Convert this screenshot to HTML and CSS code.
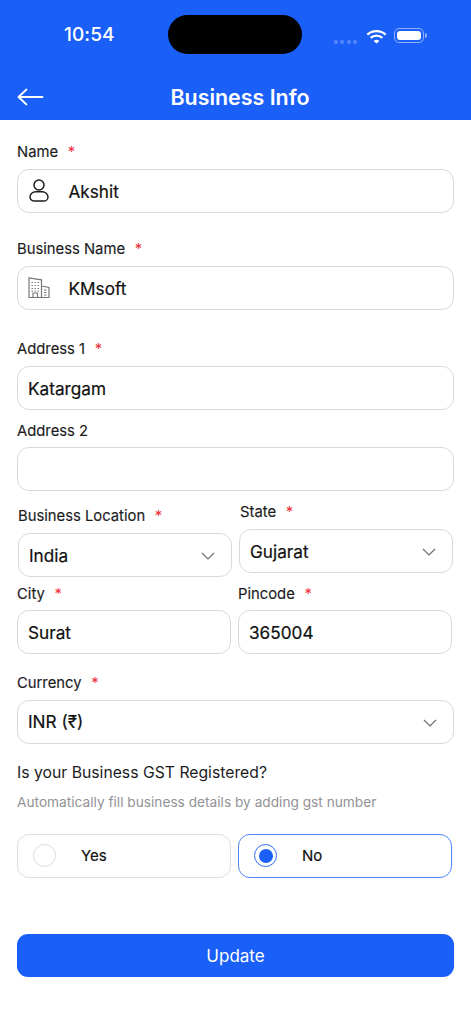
FILE: index.html
```html
<!DOCTYPE html>
<html lang="en">
<head>
<meta charset="utf-8">
<title>Business Info</title>
<link rel="stylesheet" href="styles.css">
</head>
<body>
<header class="top">
  <div class="status">
    <span class="time">10:54</span>
    <span class="island"></span>
    <span class="status-right">
      <span class="dots"><i></i><i></i><i></i><i></i></span>
      <svg class="wifi" width="21" height="15" viewBox="0 0 21 15" fill="none" stroke="#fff" stroke-width="2.3"><path d="M1.3 5.600C6.400.9 14.600.9 19.700 5.600"/><path d="M4.600 8.900c3.300-3 8.500-3 11.800 0"/><path d="M10.500 14.600 7.700 11.900c1.600-1.400 4-1.400 5.600 0z" fill="#fff" stroke="none"/></svg>
      <span class="battery"><b></b></span>
    </span>
  </div>
  <div class="nav">
    <svg class="back" width="27" height="18" viewBox="0 0 27 18" fill="none" stroke="#fff" stroke-width="1.800" stroke-linecap="round" stroke-linejoin="round"><path d="M1.500 9h24M9.500 1.500 1.500 9l8 7.500"/></svg>
    <h1>Business Info</h1>
  </div>
</header>
<main class="form">
  <div class="field f-name">
    <div class="label">Name <span class="req">*</span></div>
    <div class="box"><svg class="ico" width="20" height="23" viewBox="0 0 20 23" fill="none" stroke="#1c1c1e" stroke-width="1.500"><circle cx="10" cy="6" r="5"/><path d="M6.800 12.800h6.400c3.100 0 5.800 2.300 5.800 5.100 0 2.300-1.700 4.100-3.900 4.100H4.900C2.700 22 1 20.200 1 17.900c0-2.800 2.700-5.100 5.800-5.100z"/></svg><span class="val">Akshit</span></div>
  </div>
  <div class="field f-biz">
    <div class="label">Business Name <span class="req">*</span></div>
    <div class="box"><svg class="ico ico-b" width="22" height="21" viewBox="0 0 22 21" fill="none" stroke="#77777b" stroke-width="1.200"><path d="M1 20.500V1L13.500 2.800v17.700M13.500 9 21 10.500v10M.5 20.500h21"/><path d="M5 20.500v-4.500h4.500v4.500"/><path d="M3.500 5.500h1.500m1.500 0H8m1.500 0H11M3.500 8.500h1.500m1.500 0H8m1.500 0H11M3.500 11.500h1.500m1.500 0H8m1.500 0H11M3.500 14h1.500m1.500 0H8m1.500 0H11M16 13h2.500M16 15.500h2.500M16 18h2.500"/></svg><span class="val">KMsoft</span></div>
  </div>
  <div class="field f-addr1">
    <div class="label">Address 1 <span class="req">*</span></div>
    <div class="box"><span class="val plain">Katargam</span></div>
  </div>
  <div class="field f-addr2">
    <div class="label">Address 2</div>
    <div class="box tight"></div>
  </div>
  <div class="row r-loc">
    <div class="field col-loc">
      <div class="label">Business Location <span class="req">*</span></div>
      <div class="box"><span class="val plain">India</span><svg class="chev" width="14" height="8" viewBox="0 0 14 8" fill="none" stroke="#6e6e73" stroke-width="1.200"><path d="M1 1l6 6 6-6"/></svg></div>
    </div>
    <div class="field col-state">
      <div class="label">State <span class="req">*</span></div>
      <div class="box"><span class="val plain">Gujarat</span><svg class="chev" width="14" height="8" viewBox="0 0 14 8" fill="none" stroke="#6e6e73" stroke-width="1.200"><path d="M1 1l6 6 6-6"/></svg></div>
    </div>
  </div>
  <div class="row r-city">
    <div class="field">
      <div class="label">City <span class="req">*</span></div>
      <div class="box tight"><span class="val plain">Surat</span></div>
    </div>
    <div class="field">
      <div class="label">Pincode <span class="req">*</span></div>
      <div class="box tight"><span class="val plain">365004</span></div>
    </div>
  </div>
  <div class="field f-cur">
    <div class="label">Currency <span class="req">*</span></div>
    <div class="box"><span class="val plain">INR (₹)</span><svg class="chev" width="14" height="8" viewBox="0 0 14 8" fill="none" stroke="#6e6e73" stroke-width="1.200"><path d="M1 1l6 6 6-6"/></svg></div>
  </div>
  <p class="question">Is your Business GST Registered?</p>
  <p class="hint">Automatically fill business details by adding gst number</p>
  <div class="row r-radio">
    <div class="radio"><span class="dot"></span><span class="rlabel">Yes</span></div>
    <div class="radio on"><span class="dot"><i></i></span><span class="rlabel">No</span></div>
  </div>
  <button class="update" type="button">Update</button>
</main>
</body>
</html>
```
FILE: styles.css
```css
* { box-sizing: border-box; }
html, body { margin: 0; padding: 0; }
body {
  width: 471px;
  height: 1024px;
  overflow: hidden;
  background: #fff;
  font-family: Inter, "Liberation Sans", sans-serif;
  color: #111;
}
.top { height: 120px; background: #1a5ff7; color: #fff; }
.status { height: 69px; padding-top: 15px; display: flex; align-items: flex-start; position: relative; }
.time { position: absolute; left: 64px; top: 23px; font-size: 19px; line-height: 24px; font-weight: 500; letter-spacing: .1px; }
.island { position: absolute; left: 168px; top: 15px; width: 134px; height: 39px; border-radius: 20px; background: #000; }
.status-right { position: absolute; left: 334px; top: 27px; display: flex; align-items: center; }
.dots { display: flex; gap: 2.400px; margin-top: 13px; }
.dots i { width: 4px; height: 4px; border-radius: 50%; background: #5488fa; }
.wifi { margin: 1px 0 0 9px; }
.battery { margin-left: 7px; width: 30px; height: 15px; border: 1px solid #8fb1fb; border-radius: 5px; padding: 2px; position: relative; }
.battery b { display: block; width: 100%; height: 100%; background: #fff; border-radius: 3px; }
.battery::after { content: ""; position: absolute; right: -4px; top: 4px; width: 2px; height: 5px; background: #8fb1fb; border-radius: 0 2px 2px 0; }
.nav { height: 51px; position: relative; display: flex; justify-content: center; align-items: center; padding: 5px 0 0 9px; }
.back { position: absolute; left: 16.500px; top: 19px; }
h1 { margin: 0; font-size: 21.400px; line-height: 28px; font-weight: 600; }
.form { padding: 0 17px; }
.field { display: block; }
.label { font-size: 14.800px; line-height: 20px; font-weight: 400; color: #1c1c1e; -webkit-text-stroke: .15px #1c1c1e; }
.col-state .label { padding-left: 1px; }
.req { color: #f0303c; margin-left: 5.500px; -webkit-text-stroke: 0; }
.box {
  height: 44px;
  margin-top: 7px;
  padding-top: 2px;
  border: 1.500px solid #d9d9d9;
  border-radius: 12px;
  background: #fff;
  display: flex;
  align-items: center;
  position: relative;
}
.box.tight { margin-top: 6px; }
.f-cur .box { padding-top: 0; }
.val { font-size: 17.200px; font-weight: 400; line-height: 22px; margin-left: 50.500px; color: #111; -webkit-text-stroke: .2px #111; }
.val.plain { margin-left: 10px; }
.ico { position: absolute; left: 10.500px; top: 8.500px; }
.ico-b { top: 10px; left: 9.500px; }
.chev { position: absolute; right: 16px; top: 18px; }
.f-name { padding-top: 22px; }
.f-biz { padding-top: 26px; }
.f-addr1 { padding-top: 29px; }
.f-addr2 { padding-top: 11px; }
.row { display: grid; grid-template-columns: 214px 214px; column-gap: 7px; }
.r-loc { padding-top: 11px; margin-left: 1px; align-items: start; }
.col-loc { padding-top: 4px; }
.r-city { padding-top: 7px; }
.f-cur { padding-top: 19px; }
.question { margin: 19px 0 0; font-size: 15.750px; line-height: 20px; font-weight: 400; color: #1c1c1e; }
.hint { margin: 10px 0 0; font-size: 13.700px; line-height: 18px; color: #929296; }
.r-radio { margin-top: 23px; }
.radio { height: 44px; padding-bottom: 1px; border: 1.500px solid #dedede; border-radius: 12px; display: flex; align-items: center; position: relative; }
.radio.on { border-color: #4d84f8; }
.dot { position: absolute; left: 15px; top: 9px; width: 23px; height: 23px; border-radius: 50%; border: 1.500px solid #dedede; display: flex; align-items: center; justify-content: center; }
.radio.on .dot { border-color: #2f6cf7; }
.dot i { width: 14px; height: 14px; border-radius: 50%; background: #1a5ff7; }
.rlabel { margin-left: 63px; font-size: 15px; font-weight: 400; color: #111; -webkit-text-stroke: .2px #111; }
.update { display: block; width: 437px; height: 43px; margin-top: 56px; border: 0; border-radius: 11px; background: #1a5ff7; color: #fff; font: 400 17px/22px Inter, "Liberation Sans", sans-serif; }
```
